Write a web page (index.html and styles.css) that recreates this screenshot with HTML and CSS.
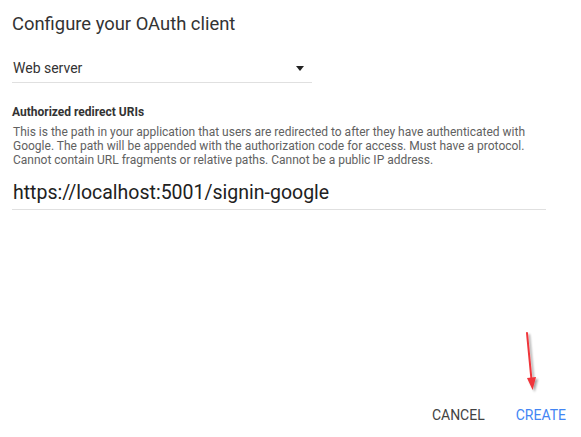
FILE: index.html
```html
<!DOCTYPE html>
<html>
<head>
<meta charset="utf-8">
<link rel="stylesheet" href="styles.css">
</head>
<body>
<div class="dialog">
  <h1 class="title">Configure your OAuth client</h1>
  <div class="select">
    <span class="select-value">Web server</span>
    <span class="caret"></span>
  </div>
  <div class="label">Authorized redirect URIs</div>
  <p class="help">This is the path in your application that users are redirected to after they have authenticated with<br>Google. The path will be appended with the authorization code for access. Must have a protocol.<br>Cannot contain URL fragments or relative paths. Cannot be a public IP address.</p>
  <div class="uri-input">https://localhost:5001/signin-google</div>
  <div class="actions">
    <span class="btn btn-cancel">CANCEL</span>
    <span class="btn btn-create">CREATE</span>
  </div>
  <svg class="annotation" width="30" height="70" viewBox="0 0 30 70">
    <defs>
      <filter id="sh" x="-50%" y="-20%" width="200%" height="140%">
        <feDropShadow dx="2" dy="2" stdDeviation="1.2" flood-color="#000" flood-opacity="0.35"/>
      </filter>
    </defs>
    <g filter="url(#sh)">
      <line x1="7" y1="3" x2="11.5" y2="50" stroke="#f0353a" stroke-width="2" stroke-linecap="round"/>
      <polygon points="7,48 16,47 12.6,60" fill="#f0353a"/>
    </g>
  </svg>
</div>
</body>
</html>
```
FILE: styles.css
```css
html, body {
  margin: 0;
  padding: 0;
  background: #fff;
}
body {
  font-family: Roboto, "Liberation Sans", Arial, sans-serif;
}
.dialog {
  position: relative;
  box-sizing: border-box;
  height: 437px;
  padding: 12px 15px 12px 12px;
  display: flex;
  flex-direction: column;
}
.title {
  margin: 0;
  font-size: 18.4px;
  line-height: 24px;
  font-weight: 400;
  color: #333;
}
.select {
  margin-top: 21px;
  width: 300px;
  box-sizing: border-box;
  padding: 1px 8px 4px 1px;
  border-bottom: 1px solid #e0e0e0;
  display: flex;
  align-items: center;
  justify-content: space-between;
}
.select-value {
  font-size: 14px;
  line-height: 20px;
  color: #333;
}
.caret {
  width: 0;
  height: 0;
  border-left: 4.5px solid transparent;
  border-right: 4.5px solid transparent;
  border-top: 5px solid #222;
  margin-top: 0;
}
.label {
  margin-top: 21px;
  font-size: 12px;
  line-height: 16px;
  font-weight: 700;
  color: #333;
}
.help {
  margin: 5px 0 0;
  font-size: 12px;
  line-height: 14px;
  color: #616161;
  padding-left: 1px;
}
.uri-input {
  margin-top: 14px;
  width: 534px;
  box-sizing: border-box;
  padding: 0 0 4px 1px;
  font-size: 19.5px;
  line-height: 24px;
  color: #212121;
  border-bottom: 1px solid #e0e0e0;
}
.actions {
  margin-top: auto;
  display: flex;
  justify-content: flex-end;
  gap: 31px;
}
.btn {
  font-size: 14px;
  line-height: 20px;
  font-weight: 400;
}
.btn-cancel {
  color: #424242;
}
.btn-create {
  color: #4285f4;
}
.annotation {
  position: absolute;
  left: 520px;
  top: 330px;
}
```
